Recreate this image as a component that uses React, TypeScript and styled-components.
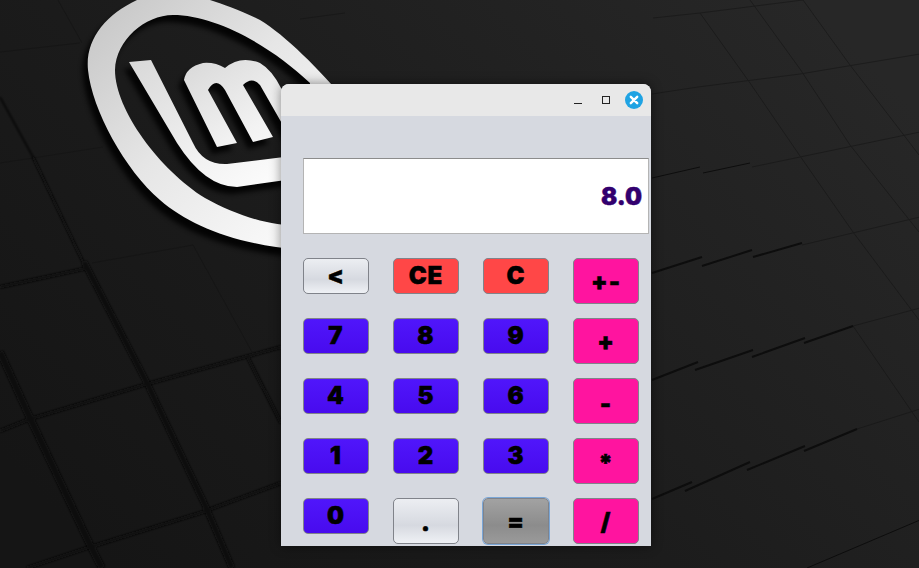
import React from 'react';
import styled, { createGlobalStyle } from 'styled-components';

type Tone = 'plain' | 'red' | 'blue' | 'pink' | 'grey';

// tall keys are 46px high; drop pushes the label down inside them
const KEYS: { label: string; tone: Tone; tall?: boolean; drop?: number }[] = [
  { label: '<', tone: 'plain' },
  { label: 'CE', tone: 'red' },
  { label: 'C', tone: 'red' },
  { label: '+-', tone: 'pink', tall: true, drop: 2 },
  { label: '7', tone: 'blue' },
  { label: '8', tone: 'blue' },
  { label: '9', tone: 'blue' },
  { label: '+', tone: 'pink', tall: true, drop: 1 },
  { label: '4', tone: 'blue' },
  { label: '5', tone: 'blue' },
  { label: '6', tone: 'blue' },
  { label: '-', tone: 'pink', tall: true, drop: 6 },
  { label: '1', tone: 'blue' },
  { label: '2', tone: 'blue' },
  { label: '3', tone: 'blue' },
  { label: '*', tone: 'pink', tall: true, drop: 5 },
  { label: '0', tone: 'blue' },
  { label: '.', tone: 'plain', tall: true, drop: 3 },
  { label: '=', tone: 'grey', tall: true, drop: 1 },
  { label: '/', tone: 'pink', tall: true, drop: 2 },
];

const RING =
  'M137 0 C105 15 85 40 88 70 C92 110 125 170 160 200 C190 226 235 244 300 250 L345 100 C320 70 285 35 260 20 C240 10 225 5 210 0 Z M115 70 C116 40 145 15 173 15 C215 15 270 45 310 83 L300 226 C270 226 235 215 205 198 C160 170 115 110 115 70 Z';
const BAR = 'M129 62 L151 60 L193 143 Q203 165 227 164 L300 155 L300 178 L237 187 Q205 187 177 143 Z';
const HUMPS =
  'M184 80 Q186 67 203 63 Q215 62 225 68 Q240 55 260 63 Q272 70 281 88 L320 150 L300 155 L260 85 Q252 76 243 85 L273 137 L253 142 L225 90 Q216 76 208 90 L237 143 L217 147 Z';

const Wallpaper = () => (
  <WallSvg viewBox="0 0 919 568">
    <defs>
      <linearGradient id="wall" x1="0" y1="0.8" x2="1" y2="0.2">
        <stop offset="0" stopColor="#151515" />
        <stop offset="0.45" stopColor="#1c1c1c" />
        <stop offset="1" stopColor="#272727" />
      </linearGradient>
      <linearGradient id="ring" x1="0" y1="0" x2="1" y2="1">
        <stop offset="0" stopColor="#c4c4c4" />
        <stop offset="0.45" stopColor="#e6e6e6" />
        <stop offset="1" stopColor="#ffffff" />
      </linearGradient>
      <linearGradient id="letter" x1="0" y1="0" x2="1" y2="1">
        <stop offset="0" stopColor="#d8d8d8" />
        <stop offset="0.6" stopColor="#f2f2f2" />
        <stop offset="1" stopColor="#ffffff" />
      </linearGradient>
      <filter id="soft" x="-20%" y="-20%" width="140%" height="140%">
        <feGaussianBlur stdDeviation="2.5" />
      </filter>
      <filter id="edge" x="-5%" y="-5%" width="110%" height="110%">
        <feGaussianBlur stdDeviation="0.8" />
      </filter>
    </defs>
    <rect width="919" height="568" fill="url(#wall)" />

    {/* faint tile seams */}
    <g stroke="#121212" strokeWidth="1" fill="none" opacity="0.5">
      <path d="M0 52 L80 43 M58 0 L82 43 M0 163 L33 158 L103 147 M92 263 L193 245 M193 245 L252 352" />
      <path d="M300 19 L345 13 M653 18 L700 13 L803 0" />
      <path d="M652 94 L698 87 L800 74 L920 54" />
      <path d="M752 167 L800 157 L920 132 M802 245 L920 217 M853 326 L920 308 M857 429 L920 409" />
      <path d="M700 13 L750 83 L800 156 L853 232 L919 320" />
      <path d="M750 0 L800 69 L850 145 L907 217 L919 232" />
      <path d="M803 0 L850 65 L903 134 L919 155" />
      <path d="M853 326 L910 409 L919 422" />
    </g>

    {/* left grooves */}
    <g stroke="#0a0a0a" fill="none" filter="url(#edge)">
      <path strokeWidth="1.5" d="M0 97 L33 157" />
      <path strokeWidth="2.5" d="M33 157 L83 262" />
      <path strokeWidth="6" d="M84 262 L147 383 L205 505 L232 568" />
      <path strokeWidth="7" d="M0 352 L30 418 L90 545 L102 568" />
      <path strokeWidth="3" d="M0 287 L88 268" />
      <path strokeWidth="3" d="M0 431 L30 419 L147 384 L281 347" />
      <path strokeWidth="3" d="M27 568 L87 548 L200 513 L281 483" />
      <path strokeWidth="3" d="M248 358 L281 423" />
    </g>

    {/* right grooves */}
    <g stroke="#0d0d0d" fill="none">
      <path strokeWidth="1" d="M652 178 L700 167 M703 173 L750 163" />
      <path strokeWidth="2" d="M652 273 L702 257 M702 266 L752 250 M753 257 L802 243" />
      <path strokeWidth="2" d="M652 380 L698 362 M695 370 L753 350 M752 357 L805 338 M804 343 L853 326" />
      <path strokeWidth="2" d="M652 499 L692 482 M685 491 L750 462 M747 470 L805 446 M804 451 L857 429" />
      <path strokeWidth="1" d="M807 568 L920 520" />
    </g>

    {/* logo */}
    <g transform="translate(-5 7)" fill="#000" filter="url(#soft)" opacity="0.85">
      <path d={BAR} />
      <path d={HUMPS} />
      <path d={RING} fillRule="evenodd" />
    </g>
    <path d={RING} fillRule="evenodd" fill="url(#ring)" />
    <path d={BAR} fill="url(#letter)" />
    <path d={HUMPS} fill="url(#letter)" />
  </WallSvg>
);

const App = () => {
  return (
    <>
      <GlobalStyle />
      <Desktop>
        <Wallpaper />
        <Window>
          <TitleBar>
            <WinIcon viewBox="0 0 14 14">
              <path d="M3 10.5h8" stroke="#222" strokeWidth="1" />
            </WinIcon>
            <WinIcon viewBox="0 0 14 14">
              <rect x="3.5" y="3.5" width="7" height="7" fill="none" stroke="#222" strokeWidth="1" />
            </WinIcon>
            <CloseIcon viewBox="0 0 18 18">
              <circle cx="9" cy="9" r="9" fill="#1fa3e3" />
              <path d="M5.8 5.8l6.4 6.4M12.2 5.8l-6.4 6.4" stroke="#fff" strokeWidth="2.4" strokeLinecap="round" />
            </CloseIcon>
          </TitleBar>
          <Body>
            <Display>8.0</Display>
            <Keypad>
              {KEYS.map((k) => (
                <Key key={k.label} $tone={k.tone} $tall={k.tall} $drop={k.drop ?? 0}>
                  {k.label}
                </Key>
              ))}
            </Keypad>
          </Body>
        </Window>
      </Desktop>
    </>
  );
};

export default App;

const GlobalStyle = createGlobalStyle`
  html, body {
    margin: 0;
    padding: 0;
    background: #1c1c1c;
    overflow: hidden;
  }
`;

const Desktop = styled.div`
  position: relative;
  width: 919px;
  height: 568px;
  overflow: hidden;
`;

const WallSvg = styled.svg`
  display: block;
  width: 919px;
  height: 568px;
`;

const Window = styled.div`
  position: absolute;
  left: 281px;
  top: 84px;
  width: 370px;
  height: 462px;
  border-radius: 8px 8px 0 0;
  background: #d6d9e0;
  overflow: hidden;
  box-shadow: 0 0 12px rgba(0, 0, 0, 0.45);
`;

const TitleBar = styled.div`
  display: flex;
  align-items: center;
  justify-content: flex-end;
  gap: 14px;
  height: 32px;
  padding-right: 8px;
  background: #e8e8e8;
`;

const WinIcon = styled.svg`
  width: 14px;
  height: 14px;
`;

const CloseIcon = styled.svg`
  width: 18px;
  height: 18px;
  margin-left: -2px;
`;

const Body = styled.div`
  padding: 42px 2px 0 22px;
`;

const Display = styled.div`
  box-sizing: border-box;
  height: 76px;
  padding: 14px 6px 0 0;
  border: 1px solid #b4b4b4;
  border-top-color: #8c8c8c;
  background: #fff;
  color: #32006e;
  font-family: Inter, 'Liberation Sans', sans-serif;
  font-size: 24px;
  font-weight: 900;
  -webkit-text-stroke: 0.4px #32006e;
  line-height: 48px;
  text-align: right;
`;

const Keypad = styled.div`
  display: grid;
  grid-template-columns: repeat(4, 66px);
  grid-auto-rows: 36px;
  column-gap: 24px;
  row-gap: 24px;
  margin-top: 24px;
  align-items: start;
`;

const toneBackground: Record<Tone, string> = {
  plain: 'linear-gradient(#eceef2, #d6d9e0 60%, #eff1f5)',
  red: '#ff4747',
  blue: 'linear-gradient(#5016fb, #480bee)',
  pink: '#ff149f',
  grey: 'linear-gradient(#a2a2a2, #8c8c8c 60%, #9a9a9a)',
};

const Key = styled.button<{ $tone: Tone; $tall?: boolean; $drop: number }>`
  box-sizing: border-box;
  width: 66px;
  height: ${(p) => (p.$tall ? '46px' : '36px')};
  padding: ${(p) => p.$drop}px 0 0;
  border: 1px solid #80838a;
  border-radius: 5px;
  background: ${(p) => toneBackground[p.$tone]};
  box-shadow: ${(p) => (p.$tone === 'grey' ? '0 0 0 1px #7aa6d6' : 'none')};
  color: #000;
  font-family: Inter, 'Liberation Sans', sans-serif;
  font-size: 24px;
  font-weight: 900;
  letter-spacing: 1px;
  -webkit-text-stroke: 0.5px #000;
  line-height: 1;
`;
